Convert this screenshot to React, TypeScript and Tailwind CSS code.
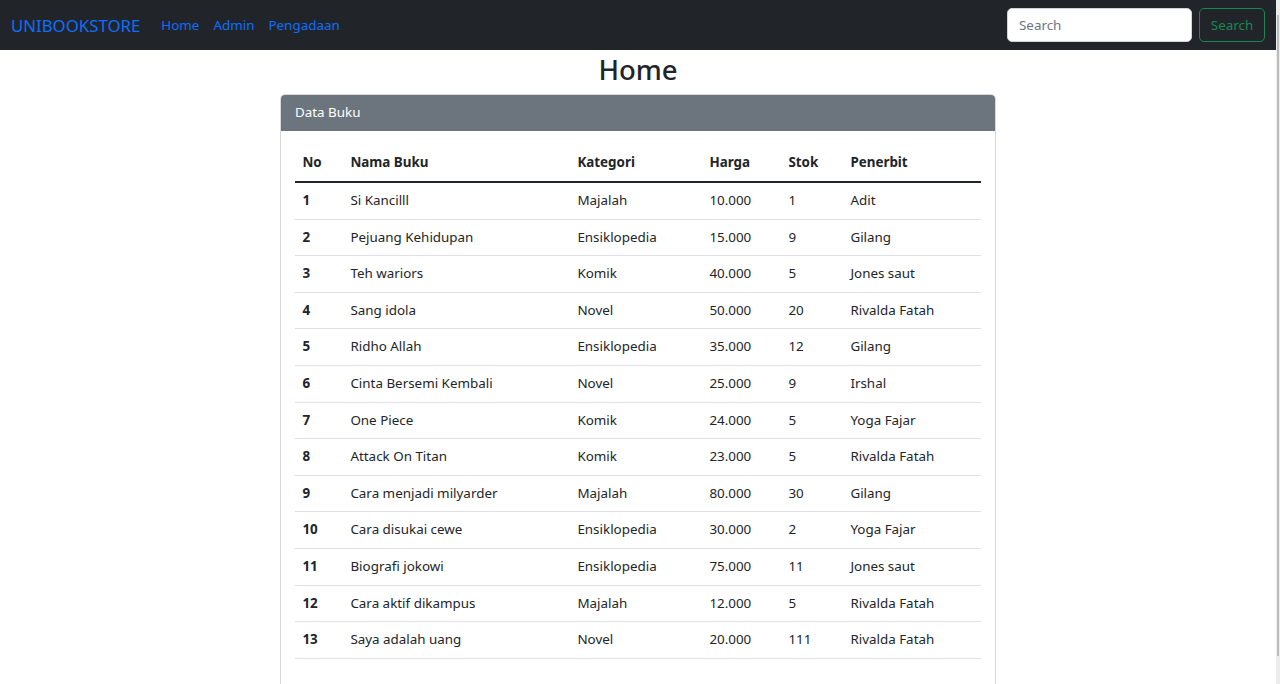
import React from "react";

const rows = [
  [1, "Si Kancilll", "Majalah", "10.000", "1", "Adit"],
  [2, "Pejuang Kehidupan", "Ensiklopedia", "15.000", "9", "Gilang"],
  [3, "Teh wariors", "Komik", "40.000", "5", "Jones saut"],
  [4, "Sang idola", "Novel", "50.000", "20", "Rivalda Fatah"],
  [5, "Ridho Allah", "Ensiklopedia", "35.000", "12", "Gilang"],
  [6, "Cinta Bersemi Kembali", "Novel", "25.000", "9", "Irshal"],
  [7, "One Piece", "Komik", "24.000", "5", "Yoga Fajar"],
  [8, "Attack On Titan", "Komik", "23.000", "5", "Rivalda Fatah"],
  [9, "Cara menjadi milyarder", "Majalah", "80.000", "30", "Gilang"],
  [10, "Cara disukai cewe", "Ensiklopedia", "30.000", "2", "Yoga Fajar"],
  [11, "Biografi jokowi", "Ensiklopedia", "75.000", "11", "Jones saut"],
  [12, "Cara aktif dikampus", "Majalah", "12.000", "5", "Rivalda Fatah"],
  [13, "Saya adalah uang", "Novel", "20.000", "111", "Rivalda Fatah"],
];

export default function App() {
  return (
    <div
      className="flex h-[684px] w-[1280px] overflow-hidden bg-white text-[#212529]"
      style={{ fontFamily: '"Noto Sans", "Open Sans", sans-serif' }}
    >
      <div className="flex w-[1276px] flex-col">
        <nav className="flex h-[50px] shrink-0 items-center justify-between bg-[#212529] px-[11px]">
          <div className="flex items-center">
            <span className="mr-[14px] text-[16.8px] leading-[27px] text-[#0d6efd]">UNIBOOKSTORE</span>
            <a className="px-[7px] text-[13.4px] text-[#0d6efd]">Home</a>
            <a className="px-[7px] text-[13.4px] text-[#0d6efd]">Admin</a>
            <a className="px-[7px] text-[13.4px] text-[#0d6efd]">Pengadaan</a>
          </div>
          <div className="flex items-center gap-[7px]">
            <input
              placeholder="Search"
              className="h-[34px] w-[185px] rounded-[5px] border border-[#ced4da] bg-white px-[11px] text-[13.4px] text-[#212529] outline-none placeholder:text-[#6c757d]"
            />
            <button className="h-[34px] w-[66px] rounded-[5px] border border-[#198754] text-[13.4px] text-[#198754]">
              Search
            </button>
          </div>
        </nav>
        <div className="flex flex-col items-center pt-[2px]">
          <h2 className="mb-[7px] text-[27.5px] font-medium leading-[35px]">Home</h2>
          <div className="w-[716px] rounded-[5px] border border-[#d9d9d9]">
            <div className="h-[36px] rounded-t-[4px] bg-[#6c757d] px-[14px] text-[13.4px] leading-[35px] text-white">
              Data Buku
            </div>
            <div className="p-[14.4px] pb-[30px]">
              <table className="w-full border-collapse text-[13.4px]">
                <colgroup>
                  <col className="w-[48px]" />
                  <col className="w-[227px]" />
                  <col className="w-[132px]" />
                  <col className="w-[79px]" />
                  <col className="w-[62px]" />
                  <col />
                </colgroup>
                <thead>
                  <tr className="border-b-2 border-[#212529]">
                    {["No", "Nama Buku", "Kategori", "Harga", "Stok", "Penerbit"].map((h) => (
                      <th key={h} className="px-[7px] py-[7px] text-left font-bold leading-[21.6px]">
                        {h}
                      </th>
                    ))}
                  </tr>
                </thead>
                <tbody>
                  {rows.map((r) => (
                    <tr key={r[0]} className="border-b border-[#dee2e6]">
                      <th className="px-[7px] py-[7px] text-left font-bold leading-[21.6px]">{r[0]}</th>
                      {r.slice(1).map((c, i) => (
                        <td key={i} className="px-[7px] py-[7px] leading-[21.6px]">
                          {c}
                        </td>
                      ))}
                    </tr>
                  ))}
                </tbody>
              </table>
            </div>
          </div>
        </div>
      </div>
      <div className="flex w-[4px] flex-col bg-[#ececec] pt-[15px] pb-[28px]">
        <div className="ml-[1px] w-[2px] flex-1 bg-[#bdbdbd]" />
      </div>
    </div>
  );
}
